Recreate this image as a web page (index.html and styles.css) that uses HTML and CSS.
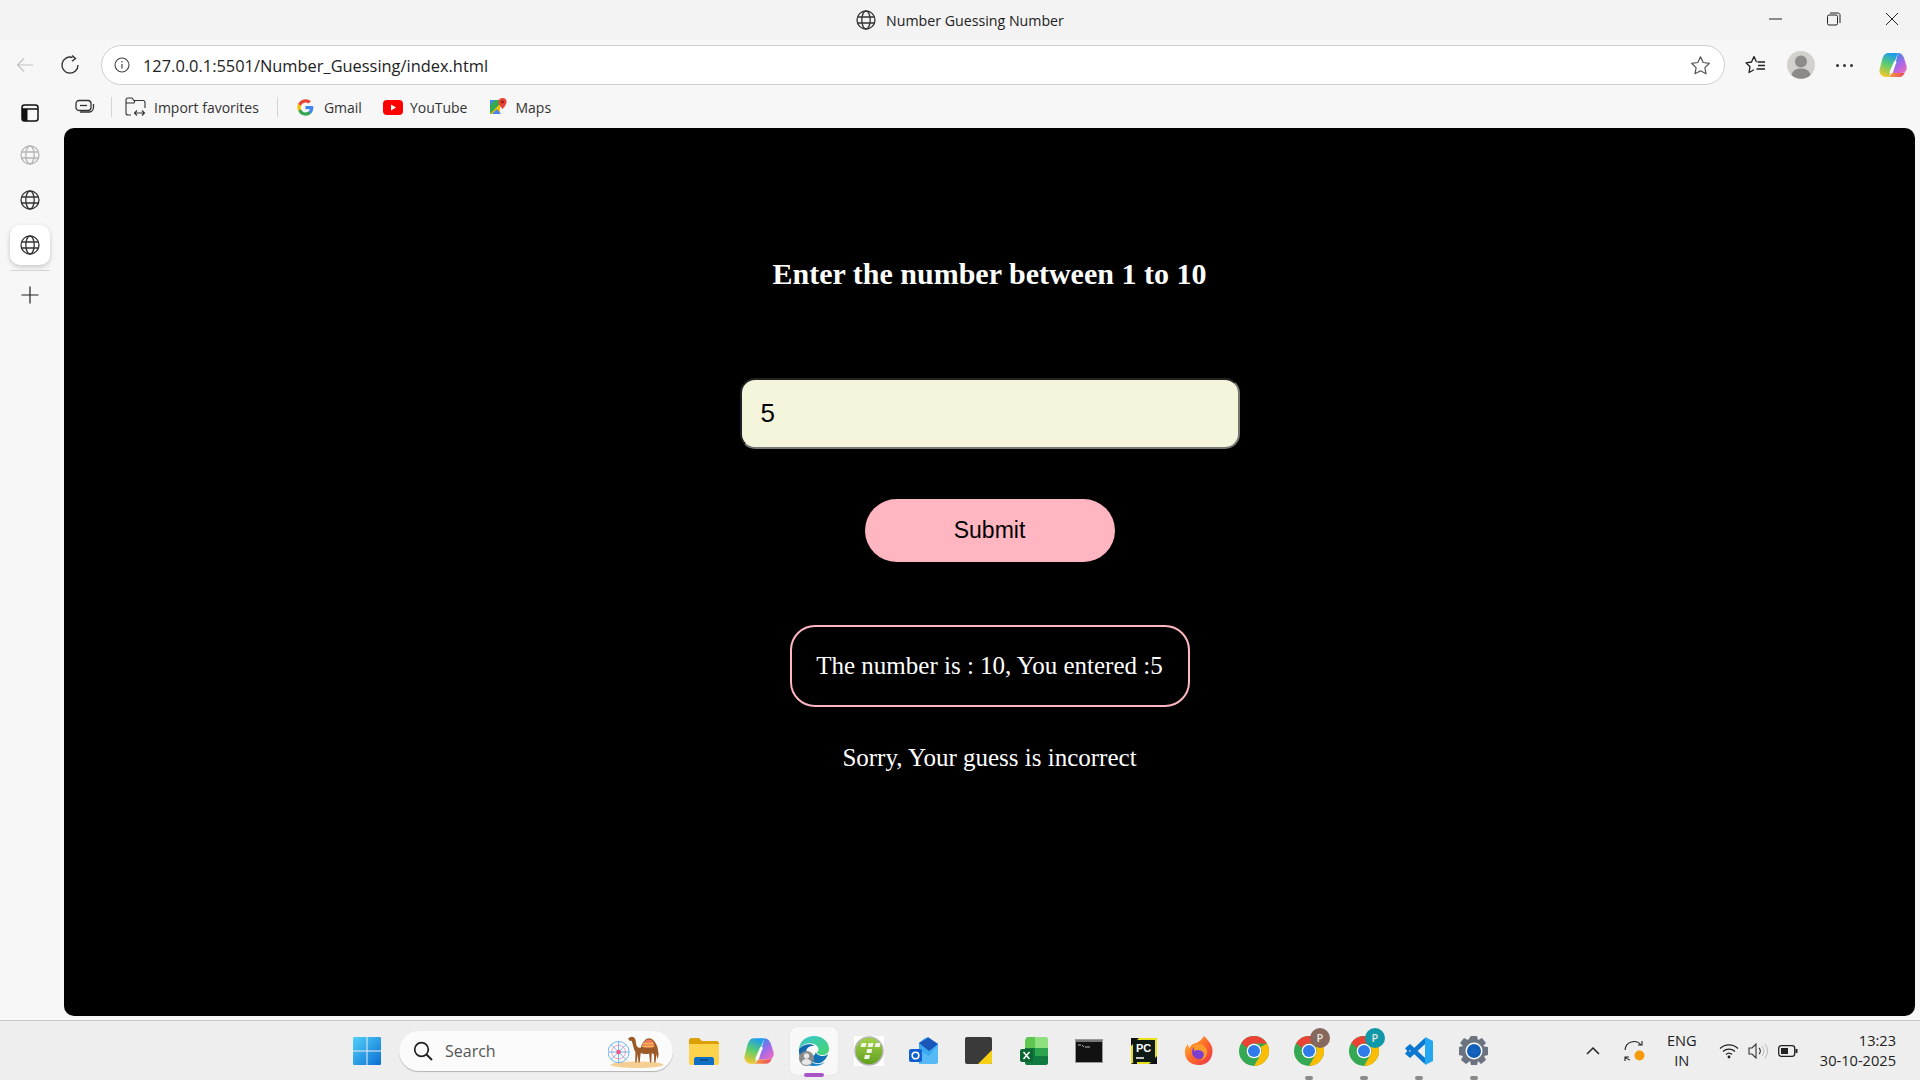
FILE: index.html
```html
<!DOCTYPE html>
<html>
<head>
	<title>Number Guessing Number</title>
	<meta charset="utf-8">
	<link rel="stylesheet" href="styles.css">
</head>
<body>
	<svg class="defs" width="0" height="0">
		<defs>
			<symbol id="globe" viewBox="0 0 20 20">
				<g fill="none" stroke="currentColor" stroke-width="1.3">
					<circle cx="10" cy="10" r="9"/>
					<ellipse cx="10" cy="10" rx="4.2" ry="9"/>
					<path d="M1.6 7h16.8M1.6 13h16.8"/>
				</g>
			</symbol>
			<symbol id="chrome" viewBox="0 0 30 30">
				<circle cx="15" cy="15" r="15" fill="#34a853"/>
				<path d="M15 0a15 15 0 0 1 13 7.500H15a7.500 7.500 0 0 0-6.900 4.500L2.300 7A15 15 0 0 1 15 0z" fill="#ea4335"/>
				<path d="M28 7.500A15 15 0 0 1 15 30l6.500-11.300A7.500 7.500 0 0 0 21.500 11z" fill="#fbbc04"/>
				<circle cx="15" cy="15" r="7.300" fill="#fff"/>
				<circle cx="15" cy="15" r="6" fill="#2f7bea"/>
			</symbol>
			<linearGradient id="copilot-a" x1="0.6" y1="0" x2="0.3" y2="1">
				<stop offset="0" stop-color="#1c9cf0"/>
				<stop offset=".5" stop-color="#5fce6a"/>
				<stop offset="1" stop-color="#f8c62c"/>
			</linearGradient>
			<linearGradient id="copilot-b" x1="0.2" y1="0" x2="0.8" y2="1">
				<stop offset="0" stop-color="#2a8ff0"/>
				<stop offset=".55" stop-color="#a868e6"/>
				<stop offset="1" stop-color="#ee6cc0"/>
			</linearGradient>
			<linearGradient id="copilot-c" x1="0" y1="0" x2="1" y2="0">
				<stop offset="0" stop-color="#f9a03a"/>
				<stop offset="1" stop-color="#e9455f"/>
			</linearGradient>
			<symbol id="copilot" viewBox="0 0 28 26">
				<path d="M9 1h10L10 25H7c-4 0-7-3-6.500-7L3 8c1-4 3-7 6-7z" fill="url(#copilot-a)"/>
				<path d="M19 1c3 0 5 2 6 5l2.500 8c1 4-1.500 7-5 7H14z" fill="url(#copilot-b)"/>
				<path d="M10 25h10c3 0 5-2 6-5-1 1-2 1-3.500 1H13l-1 1.500z" fill="url(#copilot-c)"/>
				<path d="M16.500 9.500L11.500 21" stroke="#fff" stroke-width="2.600" fill="none"/>
			</symbol>
		</defs>
	</svg>

	<div class="titlebar">
		<div class="title">
			<svg class="title-globe" width="20" height="20"><use href="#globe"/></svg>
			<span>Number Guessing Number</span>
		</div>
		<div class="window-controls">
			<svg width="14" height="14" viewBox="0 0 14 14"><path d="M0 7h13" stroke="#222" fill="none"/></svg>
			<svg width="14" height="14" viewBox="0 0 14 14"><g fill="none" stroke="#222"><rect x=".5" y="3" width="10" height="10" rx="1.500"/><path d="M3 1h8c1 0 2 1 2 2v8"/></g></svg>
			<svg width="14" height="14" viewBox="0 0 14 14"><path d="M1 1l12 12M13 1L1 13" stroke="#222" fill="none"/></svg>
		</div>
	</div>

	<div class="toolbar">
		<svg class="back" width="18" height="16" viewBox="0 0 18 16"><path d="M17 8H1.500M8 1.500L1.500 8 8 14.500" fill="none" stroke="#c2c2c2" stroke-width="1.200"/></svg>
		<svg class="reload" width="20" height="20" viewBox="0 0 20 20"><g fill="none" stroke="#333" stroke-width="1.400"><path d="M12.500 2.500A8 8 0 1 0 18 10"/><path d="M12 .5l3.500 3-3.500 2.800M15.500 3.500"/></g></svg>
		<div class="address">
			<svg width="16" height="16" viewBox="0 0 16 16"><circle cx="8" cy="8" r="7" fill="none" stroke="#444" stroke-width="1.100"/><path d="M8 7v4.500" stroke="#444" stroke-width="1.200"/><circle cx="8" cy="4.700" r=".8" fill="#444"/></svg>
			<span class="url">127.0.0.1:5501/Number_Guessing/index.html</span>
			<svg class="star" width="21" height="21" viewBox="0 0 21 21"><path d="M10.500 1.800l2.700 5.700 6.200.8-4.500 4.300 1.100 6.200-5.500-3-5.500 3 1.100-6.200L1.600 8.300l6.200-.8z" fill="none" stroke="#555" stroke-width="1.200" stroke-linejoin="round"/></svg>
		</div>
		<svg class="favs" width="21" height="20" viewBox="0 0 21 20"><g fill="none" stroke="#222" stroke-width="1.300" stroke-linejoin="round"><path d="M11.500 7L9 1.500 6.500 7 1 7.800l4 3.900-1 5.800 5-2.700"/><path d="M12.500 7H20M13 10.500h7M11.500 14H20"/></g></svg>
		<div class="profile">
			<svg width="28" height="28" viewBox="0 0 28 28"><circle cx="14" cy="14" r="14" fill="#d2d1cd"/><circle cx="14" cy="10.500" r="6" fill="#8d8b87"/><path d="M4.500 24c1-5 5-6.500 9.500-6.500s8.500 1.500 9.500 6.500a14 14 0 0 1-19 0z" fill="#8d8b87"/></svg>
		</div>
		<div class="dots"><i></i><i></i><i></i></div>
		<svg class="copilot-top" width="28" height="26"><use href="#copilot"/></svg>
	</div>

	<div class="browser">
		<div class="sidebar">
			<div class="side-item side-tabs">
				<svg width="18" height="18" viewBox="0 0 18 18"><rect x="1" y="1" width="16" height="16" rx="2.500" fill="none" stroke="#111" stroke-width="1.500"/><path d="M1 5h16" stroke="#111" stroke-width="1.500"/><rect x="1" y="5" width="5.500" height="12" fill="#111"/></svg>
			</div>
			<div class="side-item side-muted"><svg width="20" height="20"><use href="#globe"/></svg></div>
			<div class="side-item"><svg width="20" height="20"><use href="#globe"/></svg></div>
			<div class="side-item side-active"><svg width="20" height="20"><use href="#globe"/></svg></div>
			<div class="side-line"></div>
			<div class="side-item side-plus">
				<svg width="18" height="18" viewBox="0 0 18 18"><path d="M9 .5v17M.5 9h17" stroke="#222" stroke-width="1.200"/></svg>
			</div>
		</div>

		<div class="main">
			<div class="bookmarks">
				<svg class="bm-collections" width="20" height="16" viewBox="0 0 20 16"><g fill="none" stroke="#333" stroke-width="1.300"><rect x="1" y="1.500" width="15" height="10" rx="3"/><path d="M5 6.500h7"/><path d="M18.500 5v3c0 3-2 5-4 5H5"/></g></svg>
				<div class="bm-sep"></div>
				<div class="bm bm-import">
					<svg width="22" height="20" viewBox="0 0 22 20"><g fill="none" stroke="#333" stroke-width="1.100"><path d="M6 18H3c-1 0-2-1-2-2V3c0-1 1-2 2-2h4l2 2.500h9c1 0 2 1 2 2V11"/><path d="M1 6h8l1-2.500"/><path d="M10 16h9M12 13.500L9.500 16l2.500 2.500M17 13.500l2.500 2.500-2.500 2.500"/></g></svg>
					<span>Import favorites</span>
				</div>
				<div class="bm-sep bm-sep-2"></div>
				<div class="bm bm-gmail">
					<svg width="17" height="17" viewBox="0 0 24 24"><path d="M23 12.300c0-.8-.1-1.600-.2-2.300H12v4.400h6.200a5.300 5.300 0 0 1-2.300 3.500v2.900h3.700c2.200-2 3.400-5 3.400-8.500z" fill="#4285f4"/><path d="M12 23.500c3.100 0 5.700-1 7.600-2.800l-3.700-2.900c-1 .7-2.300 1.100-3.900 1.100-3 0-5.500-2-6.400-4.800H1.800v3A11.500 11.500 0 0 0 12 23.500z" fill="#34a853"/><path d="M5.600 14.100a6.900 6.900 0 0 1 0-4.400v-3H1.800a11.500 11.500 0 0 0 0 10.400z" fill="#fbbc05"/><path d="M12 4.800c1.700 0 3.200.6 4.400 1.700l3.300-3.300A11.500 11.500 0 0 0 1.800 6.700l3.800 3C6.500 6.800 9 4.800 12 4.800z" fill="#ea4335"/></svg>
					<span>Gmail</span>
				</div>
				<div class="bm bm-youtube">
					<svg width="20" height="15" viewBox="0 0 20 15"><rect width="20" height="15" rx="4" fill="#f00"/><path d="M8 4.500v6l5-3z" fill="#fff"/></svg>
					<span>YouTube</span>
				</div>
				<div class="bm bm-maps">
					<svg width="18" height="18" viewBox="0 0 18 18"><path d="M1 2h10v14H1z" fill="#34a853"/><path d="M1 16L11 6v10z" fill="#fbbc04"/><path d="M1 2h5L1 7z" fill="#4285f4"/><path d="M3 16l5-5 4 5z" fill="#4285f4"/><path d="M13.500 0a4 4 0 0 1 4 4c0 3-4 7-4 7s-4-4-4-7a4 4 0 0 1 4-4z" fill="#ea4335"/><circle cx="13.500" cy="4" r="1.400" fill="#8e1c14"/></svg>
					<span>Maps</span>
				</div>
			</div>

			<div class="page">
				<h1>Enter the number between 1 to 10</h1>
				<input class="guess" type="text" value="5">
				<button class="submit">Submit</button>
				<div class="result">The number is : 10, You entered :5</div>
				<p class="message">Sorry, Your guess is incorrect</p>
			</div>
		</div>
	</div>

	<div class="taskbar">
		<div class="task-item start">
			<svg width="30" height="30" viewBox="0 0 30 30">
				<defs><linearGradient id="win" x1="0" y1="0" x2="1" y2="1"><stop offset="0" stop-color="#52d0fb"/><stop offset="1" stop-color="#0a6fd1"/></linearGradient></defs>
				<path d="M1 2.500C1 1.500 1.500 1 2.500 1h12v13.500H1zM15.500 1h12c1 0 1.500.5 1.500 1.500v12H15.500zM1 15.500h13.500V29h-12c-1 0-1.500-.5-1.500-1.500zM15.500 15.500H29v12c0 1-.5 1.500-1.500 1.500h-12z" fill="url(#win)"/>
			</svg>
		</div>
		<div class="search">
			<svg width="20" height="20" viewBox="0 0 20 20"><circle cx="8.500" cy="8.500" r="6.800" fill="none" stroke="#222" stroke-width="1.700"/><path d="M13.500 13.500l5.500 5.500" stroke="#222" stroke-width="2"/></svg>
			<span>Search</span>
			<svg class="camel" width="57" height="36" viewBox="0 0 54 34">
				<ellipse cx="27.500" cy="30" rx="25" ry="3" fill="#f5cf94"/>
				<g fill="none" stroke="#5aa9ec" stroke-width=".8">
					<circle cx="10" cy="18" r="10"/>
					<circle cx="10" cy="18" r="6.500" stroke="#f48fb1"/>
					<path d="M10 8v20M0 18h20M3 11l14 14M17 11L3 25"/>
				</g>
				<circle cx="10" cy="18" r="2.200" fill="#f0567f"/>
				<path d="M19 5l3-1.500 2.500.5 1.500 2 1 6 2 2h2c2-6 5-9 8-9 4 0 7 5 8 9l1 6-1 5-1-5-1 8h-1.200l-.3-8-2-1-.5 9h-1.200l-.8-8.500c-3 .5-6 .5-8-.5l-1 9h-1.200l-.5-8-1.300 8h-1.200l.2-10c-2-3-2.500-8-3.500-10.500l-2.500-.5z" fill="#9c5a28"/>
				<path d="M32 13c1-4 4-7 7-7s5 3 5 7c-3 1.500-8 1.500-12 0z" fill="#ef7f5a"/>
				<path d="M33.500 10h9.500M32.500 12.500h11" stroke="#f2d14b" stroke-width=".9" fill="none"/>
			</svg>
		</div>
		<div class="task-item">
			<svg width="30" height="28" viewBox="0 0 30 28"><path d="M0 3c0-1 1-2 2-2h8l3 3h15c1 0 2 1 2 2v2H0z" fill="#dca000"/><path d="M0 7h30v19c0 1-1 2-2 2H2c-1 0-2-1-2-2z" fill="#fdd34d"/><path d="M5 22c0-1 1-2 2-2h16c1 0 2 1 2 2v6H5z" fill="#0f6fc4"/><path d="M11 23h8" stroke="#083e75" stroke-width="1.200"/></svg>
		</div>
		<div class="task-item">
			<svg width="30" height="28"><use href="#copilot"/></svg>
		</div>
		<div class="task-item task-active">
			<svg width="32" height="32" viewBox="0 0 32 32">
				<defs>
					<linearGradient id="edge-a" x1="0" y1="0" x2="1" y2="1"><stop offset="0" stop-color="#37c6d0"/><stop offset="1" stop-color="#47d66c"/></linearGradient>
					<linearGradient id="edge-b" x1="0" y1="0" x2="1" y2="1"><stop offset="0" stop-color="#0d5fa6"/><stop offset="1" stop-color="#1b8fd4"/></linearGradient>
				</defs>
				<path d="M1 14C2 6 8 1 16 1c9 0 15 6 15 13 0 4-3 6-7 6-3 0-5-1-5-3 2-1 2-4 0-6-4-4-13-4-18 3z" fill="url(#edge-a)"/>
				<path d="M1 14c4-5 12-6 16-3-6-1-10 3-9 9 1 5 6 9 12 9 3 0 5-1 7-2-3 3-7 4-11 4C7 31 0 24 1 14z" fill="url(#edge-b)"/>
				<path d="M18 17c0 2 3 4 7 4 2 0 4-1 5-2-1 3-3 7-8 9-6 1-12-3-13-8 2 3 8 2 9-3z" fill="#1272b8"/>
				<circle cx="8.500" cy="23.500" r="7.500" fill="#8b8b8b"/>
				<circle cx="8.500" cy="21" r="2.700" fill="#e8e8e8"/>
				<path d="M3.500 28c.5-3 2.500-4 5-4s4.500 1 5 4a7.500 7.500 0 0 1-10 0z" fill="#e8e8e8"/>
			</svg>
			<div class="running running-purple"></div>
		</div>
		<div class="task-item">
			<svg width="30" height="30" viewBox="0 0 30 30">
				<defs><linearGradient id="tally" x1="0" y1="0" x2="0" y2="1"><stop offset="0" stop-color="#a5d24a"/><stop offset="1" stop-color="#5f9e1f"/></linearGradient></defs>
				<rect width="30" height="30" fill="#fff"/>
				<circle cx="15" cy="15" r="14" fill="url(#tally)" stroke="#b5b5b5" stroke-width="1.500"/>
				<g fill="#f2f6e6"><rect x="7" y="7" width="5" height="4" transform="skewX(-12) translate(2 0)"/><rect x="14" y="7" width="5" height="4" transform="skewX(-12) translate(2 0)"/><rect x="21" y="7" width="5" height="4" transform="skewX(-12) translate(2 0)"/><rect x="13" y="13" width="5" height="4" transform="skewX(-12) translate(3 0)"/><rect x="11" y="19" width="5" height="4" transform="skewX(-12) translate(4 0)"/></g>
			</svg>
		</div>
		<div class="task-item">
			<svg width="30" height="28" viewBox="0 0 30 28">
				<path d="M10 6L19 0l10 7-9 7z" fill="#1c6fd8"/>
				<path d="M10 6l6-5 3 1 10 5v17c0 2-1 3-3 3H10z" fill="#39a8ef"/>
				<path d="M10 6L19 1l10 6-9 7z" fill="#1a55b8"/>
				<path d="M10 13l10 6 9-12v17c0 2-1 3-3 3H10z" fill="#57b9f5"/>
				<rect y="12" width="13" height="13" rx="2" fill="#0f5fd0"/>
				<circle cx="6.500" cy="18.500" r="3.300" fill="none" stroke="#fff" stroke-width="1.600"/>
			</svg>
		</div>
		<div class="task-item">
			<svg width="27" height="27" viewBox="0 0 27 27"><rect width="27" height="27" rx="2" fill="#3a3a3a"/><path d="M27 13v12c0 1-1 2-2 2H13z" fill="#f7cf14"/></svg>
		</div>
		<div class="task-item">
			<svg width="28" height="28" viewBox="0 0 28 28"><path d="M5 5c0-3 1-5 3-5h7v11H5z" fill="#5fc74f"/><path d="M15 0h11c1 0 2 1 2 2v9H15z" fill="#8fe07f"/><path d="M5 11h23v15c0 1-1 2-2 2H7c-1 0-2-1-2-2z" fill="#0f7b3e"/><path d="M15 11h13v8H15z" fill="#2da44e"/><rect y="12" width="13" height="13" rx="2" fill="#0c6633"/><path d="M3.500 15l6 7M9.500 15l-6 7" stroke="#fff" stroke-width="1.500"/></svg>
		</div>
		<div class="task-item">
			<svg width="28" height="24" viewBox="0 0 28 24"><rect x=".5" y=".5" width="27" height="23" fill="#111" stroke="#9a9a9a"/><rect x="1" y="1" width="26" height="2" fill="#777"/><path d="M3 6h3M7 6l2 2M10 8h5" stroke="#bbb" stroke-width="1"/></svg>
		</div>
		<div class="task-item">
			<svg width="26" height="26" viewBox="0 0 26 26">
				<rect width="26" height="26" fill="#e8e01d"/>
				<path d="M0 8V0h8zM26 18v8h-8zM0 26l6-4v4z" fill="#111"/>
				<rect x="2" y="2" width="22" height="22" fill="#0d1a16"/>
				<text class="pc-text" x="5" y="14">PC</text>
				<path d="M5 20h8" stroke="#fff" stroke-width="1.500"/>
			</svg>
		</div>
		<div class="task-item">
			<svg width="30" height="30" viewBox="0 0 30 30">
				<defs><linearGradient id="fox" x1="0" y1="0" x2="1" y2="1"><stop offset="0" stop-color="#ffc32e"/><stop offset=".5" stop-color="#ff6a2a"/><stop offset="1" stop-color="#e8304f"/></linearGradient></defs>
				<path d="M20 0c3 3 6 6 8 11 2 8-2 18-13 18C6 29 0 23 1 14c.5-3 2-5 3-6 0 2 .5 3 1.500 4 1-3 4-5 7-5 3-2 6-4 7.500-7z" fill="url(#fox)"/>
				<circle cx="15" cy="16" r="7" fill="#7d3fd1"/>
				<path d="M10 10c4-3 11-2 13 4 1 5-2 10-8 11 4-2 6-6 4-9-2-2-6-3-9-1z" fill="#ff9a2c"/>
			</svg>
		</div>
		<div class="task-item"><svg width="30" height="30"><use href="#chrome"/></svg></div>
		<div class="task-item">
			<svg width="30" height="30"><use href="#chrome"/></svg>
			<div class="badge badge-brown">P</div>
			<div class="running"></div>
		</div>
		<div class="task-item">
			<svg width="30" height="30"><use href="#chrome"/></svg>
			<div class="badge badge-teal">P</div>
			<div class="running"></div>
		</div>
		<div class="task-item">
			<svg width="30" height="30" viewBox="0 0 30 30"><g fill="none" stroke="#0a78d0" stroke-width="4.500"><path d="M22 4L6 19l-3.500-3"/><path d="M22 26L6 11l-3.500 3"/></g><path d="M21 1l8 4v20l-8 4z" fill="#22a7f2"/></svg>
			<div class="running"></div>
		</div>
		<div class="task-item">
			<svg width="30" height="30" viewBox="0 0 30 30"><path d="M12 0h6l1 4 4-2 4 5-3 3 4 1 1 0v8l-4 1 2 4-5 4-3-3-1 4h-6l-1-4-4 3-5-4 2-4-4-1v-8l4-1-3-3 4-5 4 2z" fill="#6b7280"/><circle cx="15" cy="15" r="8.500" fill="#fff"/><circle cx="15" cy="15" r="7" fill="#0f5fb8"/><circle cx="15" cy="15" r="3.500" fill="#1565c0"/></svg>
			<div class="running"></div>
		</div>

		<div class="tray">
			<svg class="tray-chevron" width="14" height="9" viewBox="0 0 14 9"><path d="M1 8l6-6 6 6" fill="none" stroke="#222" stroke-width="1.500"/></svg>
			<svg class="tray-sync" width="22" height="22" viewBox="0 0 22 22"><g fill="none" stroke="#222" stroke-width="1.100"><path d="M1 10a9 9 0 0 1 16-5M18 1v4h-4"/><path d="M1 21v-4h4M1 17a9 9 0 0 0 5 3"/></g><circle cx="15.500" cy="15.500" r="5" fill="#f59a0a"/></svg>
			<div class="tray-lang">ENG<br>IN</div>
			<svg class="tray-wifi" width="20" height="16" viewBox="0 0 20 16"><g fill="none" stroke="#222" stroke-width="1.300"><path d="M1 5.500a13 13 0 0 1 18 0M4 8.500a9 9 0 0 1 12 0M7 11.500a4.500 4.500 0 0 1 6 0"/></g><circle cx="10" cy="14" r="1.400" fill="#222"/></svg>
			<svg class="tray-volume" width="20" height="16" viewBox="0 0 20 16"><path d="M1 5h3l4-4v14l-4-4H1z" fill="none" stroke="#333" stroke-width="1.100"/><path d="M11 5a4 4 0 0 1 0 6" fill="none" stroke="#333" stroke-width="1.100"/><path d="M14 3a8 8 0 0 1 0 10M17 1a11 11 0 0 1 0 14" fill="none" stroke="#bbb" stroke-width="1"/></svg>
			<svg class="tray-battery" width="20" height="12" viewBox="0 0 20 12"><rect x=".7" y=".7" width="16" height="10.600" rx="2.500" fill="none" stroke="#222" stroke-width="1.300"/><rect x="3" y="3" width="7" height="6" fill="#222"/><rect x="17.500" y="4" width="2" height="4" fill="#222"/></svg>
			<div class="tray-clock">13:23<br>30-10-2025</div>
		</div>
	</div>
</body>
</html>
```

FILE: styles.css
```css
* {
	box-sizing: border-box;
}

body {
	margin: 0;
	width: 1920px;
	height: 1080px;
	overflow: hidden;
	display: flex;
	flex-direction: column;
	background-color: #f7f7f7;
	font-family: "Open Sans", "Noto Sans", sans-serif;
	color: #222;
}

.defs {
	position: absolute;
}

svg {
	display: block;
	flex-shrink: 0;
}

/* title bar */
.titlebar {
	height: 40px;
	background-color: #f3f3f3;
	display: flex;
	align-items: center;
	justify-content: center;
	position: relative;
}

.title {
	display: flex;
	align-items: center;
	gap: 10px;
	font-size: 14.2px;
	color: #222;
}

.title-globe {
	color: #333;
}

.window-controls {
	position: absolute;
	right: 21px;
	top: 12px;
	display: flex;
	gap: 44px;
}

/* address bar row */
.toolbar {
	height: 48px;
	padding-top: 2px;
	display: flex;
	align-items: center;
}

.back {
	margin-left: 16px;
}

.reload {
	margin-left: 26px;
}

.address {
	margin-left: 21px;
	width: 1624px;
	height: 40px;
	background-color: #fff;
	border: 1px solid #cfcfcf;
	border-radius: 20px;
	display: flex;
	align-items: center;
	padding: 0 13px 0 12px;
}

.url {
	margin-left: 13px;
	font-size: 16.4px;
	color: #222;
}

.star {
	margin-left: auto;
}

.favs {
	margin-left: 20px;
}

.profile {
	margin-left: 21px;
}

.dots {
	margin-left: 21px;
	display: flex;
	gap: 4px;
}

.dots i {
	width: 3px;
	height: 3px;
	background-color: #333;
	border-radius: 50%;
}

.copilot-top {
	margin-left: 26px;
}

/* sidebar + page */
.browser {
	display: flex;
	height: 928px;
}

.sidebar {
	width: 64px;
	padding: 5px 5px 0 0;
	display: flex;
	flex-direction: column;
	align-items: center;
}

.side-item {
	width: 40px;
	height: 40px;
	margin-bottom: 5px;
	display: flex;
	align-items: center;
	justify-content: center;
	color: #333;
}

.side-tabs {
	margin-bottom: 2px;
}

.side-muted {
	color: #b5b5b5;
}

.side-active {
	background-color: #fff;
	border-radius: 10px;
	box-shadow: 0 2px 5px rgba(0, 0, 0, 0.2);
}

.side-line {
	width: 40px;
	height: 1px;
	background-color: #d4d4d4;
}

.side-plus {
	margin-top: 4px;
}

.main {
	flex: 1;
	display: flex;
	flex-direction: column;
}

.bookmarks {
	height: 40px;
	display: flex;
	align-items: center;
	padding: 0 0 2px 11px;
	font-size: 14px;
	color: #333;
}

.bm {
	display: flex;
	align-items: center;
}

.bm-sep {
	width: 1px;
	height: 20px;
	background-color: #d4d4d4;
	margin-left: 16px;
}

.bm-sep-2 {
	margin-left: 18px;
}

.bm-import {
	margin-left: 13px;
	gap: 7px;
}

.bm-gmail {
	margin-left: 19px;
	gap: 10px;
}

.bm-youtube {
	margin-left: 21px;
	gap: 7px;
}

.bm-maps {
	margin-left: 22px;
	gap: 8px;
}

.page {
	width: 1851px;
	height: 888px;
	background-color: #000;
	border-radius: 10px;
	display: flex;
	flex-direction: column;
	align-items: center;
	padding-top: 130px;
	color: #fff;
	font-family: "Liberation Serif", serif;
}

h1 {
	margin: 0;
	font-size: 30px;
	line-height: 32px;
}

.guess {
	margin-top: 88px;
	width: 500px;
	height: 71px;
	background-color: #f5f5dc;
	border: 2px inset #767676;
	border-radius: 15px;
	padding: 0 19px;
	font-family: "Liberation Sans", sans-serif;
	font-size: 26px;
	color: #000;
}

.submit {
	margin-top: 50px;
	width: 250px;
	height: 63px;
	background-color: #ffb6c1;
	border: none;
	border-radius: 32px;
	font-family: "Liberation Sans", sans-serif;
	font-size: 23px;
	color: #000;
}

.result {
	margin-top: 63px;
	width: 400px;
	height: 82px;
	border: 2px solid #ffb6c1;
	border-radius: 25px;
	display: flex;
	align-items: center;
	justify-content: center;
	font-size: 25px;
}

.message {
	margin: 37px 0 0;
	font-size: 25px;
}

/* windows taskbar */
.taskbar {
	margin-top: 4px;
	height: 60px;
	background-color: #eeeeee;
	border-top: 1px solid #c8c8c8;
	display: flex;
	align-items: center;
	padding-left: 339px;
	position: relative;
}

.task-item {
	width: 55px;
	height: 48px;
	display: flex;
	align-items: center;
	justify-content: center;
	position: relative;
}

.task-active {
	background-color: #f8f8f8;
	border-radius: 6px;
	box-shadow: 0 0 1px rgba(0, 0, 0, 0.2);
	width: 48px;
	margin: 0 3.500px;
}

.running {
	position: absolute;
	bottom: -5px;
	left: 50%;
	margin-left: -4px;
	width: 8px;
	height: 4px;
	border-radius: 2px;
	background-color: #8a8a8a;
}

.running-purple {
	bottom: -2px;
	margin-left: -10px;
	width: 20px;
	background-color: #a855c8;
}

.badge {
	position: absolute;
	top: 1px;
	right: 6px;
	width: 20px;
	height: 20px;
	border-radius: 50%;
	font-size: 11px;
	font-weight: 600;
	line-height: 20px;
	text-align: center;
	color: #e9e4e0;
}

.badge-brown {
	background-color: #86695c;
}

.badge-teal {
	background-color: #0f99a8;
}

.pc-text {
	font-family: "Liberation Sans", sans-serif;
	font-size: 11px;
	font-weight: 700;
	fill: #fff;
}

.search {
	width: 274px;
	height: 40px;
	margin: 0 3px 0 5px;
	background-color: #fbfbfb;
	border-radius: 20px;
	box-shadow: 0 1px 1px rgba(0, 0, 0, 0.25);
	display: flex;
	align-items: center;
	padding: 0 8px 0 14px;
	font-size: 16px;
	color: #555;
}

.search span {
	margin-left: 12px;
}

.camel {
	margin-left: auto;
}

.tray {
	position: absolute;
	right: 24px;
	top: 0;
	height: 59px;
	display: flex;
	align-items: center;
}

.tray-sync {
	margin-left: 24px;
}

.tray-lang {
	margin-left: 16px;
	padding-bottom: 2px;
	width: 40px;
	font-size: 14.6px;
	line-height: 20px;
	text-align: center;
}

.tray-wifi {
	margin-left: 17px;
}

.tray-volume {
	margin-left: 9px;
}

.tray-battery {
	margin-left: 10px;
}

.tray-clock {
	margin-left: 22px;
	padding-bottom: 2px;
	font-size: 14.6px;
	line-height: 20px;
	text-align: right;
}
```
